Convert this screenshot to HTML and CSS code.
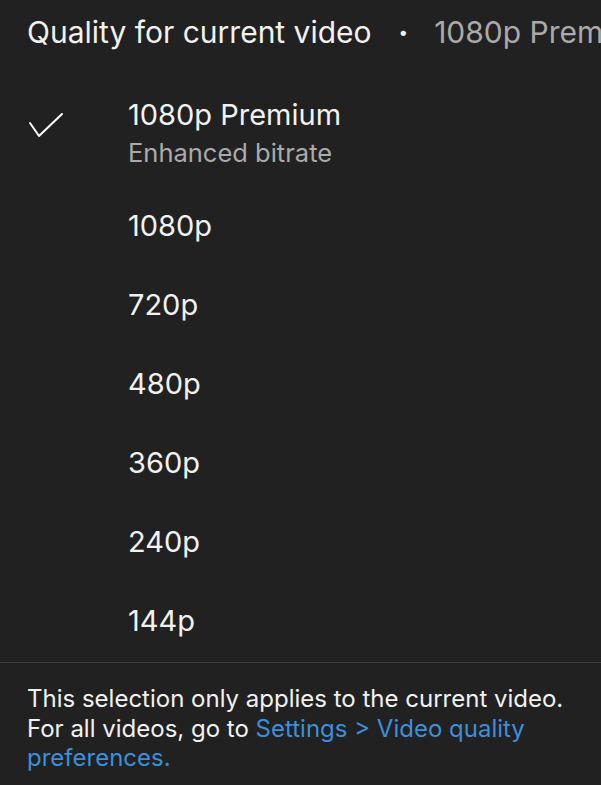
FILE: index.html
```html
<!DOCTYPE html>
<html lang="en">
<head>
    <meta charset="UTF-8">
    <meta name="viewport" content="width=device-width, initial-scale=1.0">
    <title>Quality for current video</title>
    <link rel="stylesheet" href="styles.css">
</head>
<body>
    <div class="sheet">
        <div class="header">
            <span class="header-title">Quality for current video</span>
            <span class="header-dot">&bull;</span>
            <span class="header-value">1080p Premium</span>
        </div>

        <ul class="options">
            <li class="option option-premium">
                <span class="check">
                    <svg width="36" height="26" viewBox="0 0 36 26">
                        <path d="M2 11 L11 24 L34 2" fill="none" stroke="#ffffff" stroke-width="2" stroke-linecap="round" stroke-linejoin="round"/>
                    </svg>
                </span>
                <div class="option-text">
                    <div class="option-label">1080p Premium</div>
                    <div class="option-sub">Enhanced bitrate</div>
                </div>
            </li>
            <li class="option"><span class="check"></span><span class="option-label">1080p</span></li>
            <li class="option"><span class="check"></span><span class="option-label">720p</span></li>
            <li class="option"><span class="check"></span><span class="option-label">480p</span></li>
            <li class="option"><span class="check"></span><span class="option-label">360p</span></li>
            <li class="option"><span class="check"></span><span class="option-label">240p</span></li>
            <li class="option"><span class="check"></span><span class="option-label">144p</span></li>
        </ul>

        <div class="footer">
            This selection only applies to the current video.
            For all videos, go to <a href="#" class="link">Settings &gt; Video quality preferences.</a>
        </div>
    </div>
</body>
</html>
```

FILE: styles.css
```css
body {
    margin: 0;
    background-color: #212121;
    color: #f1f1f1;
    font-family: Inter, "Noto Sans", sans-serif;
}
.sheet {
    width: 601px;
    overflow: hidden;
}
.header {
    height: 64px;
    line-height: 64px;
    padding-left: 27px;
    font-size: 30px;
    white-space: nowrap;
    overflow: hidden;
    display: flex;
}
.header-title {
    color: #f1f1f1;
}
.header-dot {
    font-size: 17px;
    color: #f1f1f1;
    margin: 0 26px 0 27px;
}
.header-value {
    color: #aaaaaa;
}
.options {
    list-style: none;
    margin: 0;
    padding: 0;
}
.option {
    display: flex;
    height: 79px;
    line-height: 79px;
    font-size: 29px;
}
.check {
    width: 100px;
    padding-left: 28px;
    flex-shrink: 0;
}
.option-premium {
    height: 122px;
    line-height: normal;
}
.option-premium .check {
    padding-top: 46px;
}
.option-text {
    padding-top: 32px;
}
.option-premium .option-label {
    line-height: 38px;
}
.option-sub {
    font-size: 25.5px;
    line-height: 37px;
    color: #aaaaaa;
}
.footer {
    border-top: 1px solid #3a3a3a;
    margin-top: 2px;
    padding: 21px 27px 0;
    font-size: 24px;
    line-height: 29.5px;
}
.link {
    color: #3d8fdb;
    text-decoration: none;
}
```
